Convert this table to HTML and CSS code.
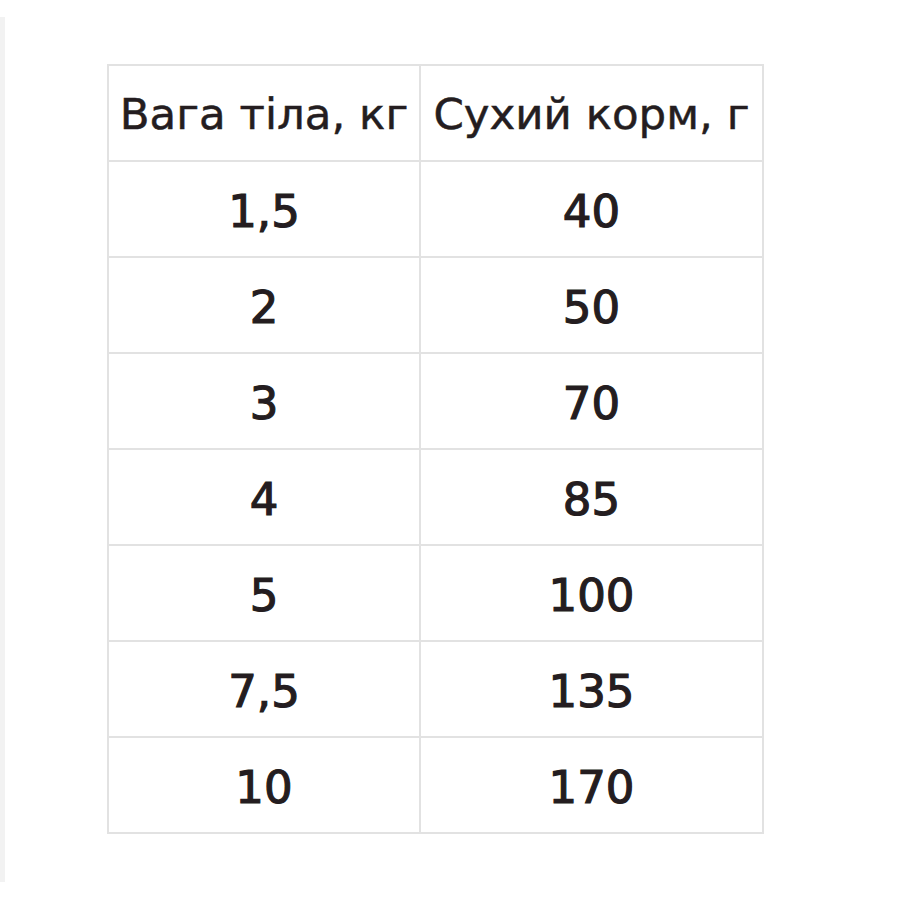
FILE: index.html
```html
<!DOCTYPE html>
<html lang="uk">
<head>
<meta charset="utf-8">
<title>Таблиця годування</title>
<link rel="stylesheet" href="styles.css">
</head>
<body>
<div class="page">
  <div class="strip"></div>
  <div class="content">
    <table class="feed">
      <thead>
        <tr><th>Вага тіла, кг</th><th>Сухий корм, г</th></tr>
      </thead>
      <tbody>
        <tr><td>1,5</td><td>40</td></tr>
        <tr><td>2</td><td>50</td></tr>
        <tr><td>3</td><td>70</td></tr>
        <tr><td>4</td><td>85</td></tr>
        <tr><td>5</td><td>100</td></tr>
        <tr><td>7,5</td><td>135</td></tr>
        <tr><td>10</td><td>170</td></tr>
      </tbody>
    </table>
  </div>
</div>
</body>
</html>
```
FILE: styles.css
```css
html, body {
  margin: 0;
  padding: 0;
  background: #ffffff;
}
.page {
  width: 900px;
  height: 900px;
  display: flex;
  align-items: flex-start;
}
.strip {
  width: 5px;
  height: 865px;
  margin-top: 17px;
  background: #f2f2f2;
  flex: none;
}
.content {
  padding-top: 64px;
  padding-left: 102px;
}
.feed {
  border-collapse: collapse;
  font-family: "DejaVu Sans", "Noto Sans", sans-serif;
  color: #241d20;
  table-layout: fixed;
  width: 657px;
}
.feed th, .feed td {
  border: 2px solid #e2e2e2;
  text-align: center;
  padding: 4px 0 0 0;
  height: 90px;
  line-height: 1;
  white-space: nowrap;
}
.feed th:first-child, .feed td:first-child {
  width: 310px;
}
.feed th {
  font-size: 43.5px;
  font-weight: 400;
  -webkit-text-stroke: 0.5px #241d20;
}
.feed td {
  font-size: 45px;
  font-weight: 400;
  -webkit-text-stroke: 1.2px #241d20;
}
```
